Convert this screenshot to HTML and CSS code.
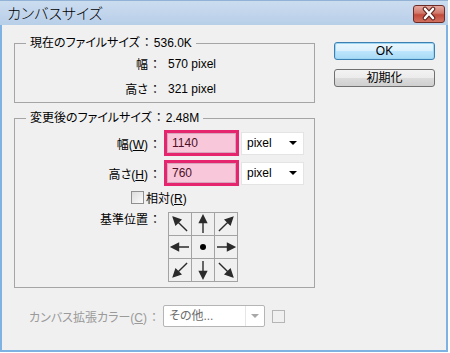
FILE: index.html
```html
<!DOCTYPE html>
<html lang="ja">
<head>
  <meta charset="UTF-8" />
  <title>カンバスサイズ</title>
  <link rel="stylesheet" href="styles.css">
</head>
<body>
  <div class="window">
    <div class="titlebar">
      <span class="title">カンバスサイズ</span>
      <span class="close">
        <svg width="30" height="15" viewBox="0 0 30 15">
          <path d="M11 3 L19 12 M19 3 L11 12" stroke="#5a1d18" stroke-width="4.5" stroke-linecap="round"/>
          <path d="M11 3 L19 12 M19 3 L11 12" stroke="#fff" stroke-width="2.6" stroke-linecap="round"/>
        </svg>
      </span>
    </div>

    <div class="content">
      <div class="main">
        <fieldset class="group current">
          <legend>現在のファイルサイズ<span class="colon">：</span>536.0K</legend>
          <div class="row">
            <span class="label">幅<span class="colon">：</span></span>
            <span class="value">570 pixel</span>
          </div>
          <div class="row">
            <span class="label">高さ<span class="colon">：</span></span>
            <span class="value">321 pixel</span>
          </div>
        </fieldset>

        <fieldset class="group changed">
          <legend>変更後のファイルサイズ<span class="colon">：</span>2.48M</legend>
          <div class="row field">
            <span class="label">幅(<u>W</u>)<span class="colon">：</span></span>
            <div class="input">1140</div>
            <div class="select">pixel<span class="caret"></span></div>
          </div>
          <div class="row field">
            <span class="label">高さ(<u>H</u>)<span class="colon">：</span></span>
            <div class="input">760</div>
            <div class="select">pixel<span class="caret"></span></div>
          </div>
          <div class="check">
            <span class="box"></span>
            <span>相対(<u>R</u>)</span>
          </div>
          <div class="row anchor">
            <span class="label">基準位置<span class="colon">：</span></span>
            <div class="grid">
              <div class="cell"><svg viewBox="0 0 22 22"><g transform="rotate(-45 11 11)"><path d="M11 1.5 L14.5 8.5 L7.5 8.5 Z M11 7 V21"/></g></svg></div>
              <div class="cell"><svg viewBox="0 0 22 22"><path d="M11 2.5 L14.5 9.5 L7.5 9.5 Z M11 8 V20"/></svg></div>
              <div class="cell"><svg viewBox="0 0 22 22"><g transform="rotate(45 11 11)"><path d="M11 1.5 L14.5 8.5 L7.5 8.5 Z M11 7 V21"/></g></svg></div>
              <div class="cell"><svg viewBox="0 0 22 22"><g transform="rotate(-90 11 11)"><path d="M11 2.5 L14.5 9.5 L7.5 9.5 Z M11 8 V20"/></g></svg></div>
              <div class="cell"><svg viewBox="0 0 22 22"><circle cx="11" cy="11" r="3"/></svg></div>
              <div class="cell"><svg viewBox="0 0 22 22"><g transform="rotate(90 11 11)"><path d="M11 2.5 L14.5 9.5 L7.5 9.5 Z M11 8 V20"/></g></svg></div>
              <div class="cell"><svg viewBox="0 0 22 22"><g transform="rotate(-135 11 11)"><path d="M11 1.5 L14.5 8.5 L7.5 8.5 Z M11 7 V21"/></g></svg></div>
              <div class="cell"><svg viewBox="0 0 22 22"><g transform="rotate(180 11 11)"><path d="M11 2.5 L14.5 9.5 L7.5 9.5 Z M11 8 V20"/></g></svg></div>
              <div class="cell"><svg viewBox="0 0 22 22"><g transform="rotate(135 11 11)"><path d="M11 1.5 L14.5 8.5 L7.5 8.5 Z M11 7 V21"/></g></svg></div>
            </div>
          </div>
        </fieldset>

        <div class="row extension">
          <span class="label">カンバス拡張カラー(<u>C</u>)<span class="colon">：</span></span>
          <div class="combo">
            <span class="combo-text">その他...</span>
            <span class="combo-btn"><span class="caret"></span></span>
          </div>
          <span class="swatch"></span>
        </div>
      </div>

      <div class="side">
        <div class="btn ok">OK</div>
        <div class="btn">初期化</div>
      </div>
    </div>
  </div>
</body>
</html>
```

FILE: styles.css
```css
body {
  margin: 0;
  background: #fff;
  font-family: "Liberation Sans", "Noto Sans CJK JP", sans-serif;
  font-size: 12px;
  font-feature-settings: "palt";
  color: #000;
}
.colon {
  font-feature-settings: normal;
  padding: 0 1px;
}
.window {
  width: 448px;
  height: 352px;
  box-sizing: border-box;
  background: #f0f0f0;
  border: 2px solid #7db2e2;
  border-top: none;
}
.titlebar {
  height: 25px;
  margin: 0 -2px;
  padding: 0 3px 0 7px;
  display: flex;
  justify-content: space-between;
  background: linear-gradient(#cbdcef, #b8cfe9);
  border-top: 1px solid #93b3d6;
  box-sizing: border-box;
}
.title {
  font-family: "Noto Sans CJK JP", sans-serif;
  font-size: 15px;
  font-weight: 300;
  line-height: 24px;
}
.close {
  margin-top: 4px;
  width: 30px;
  height: 16px;
  border: 1px solid #6d2b26;
  border-radius: 3px;
  background: linear-gradient(#e7a99f, #d07769 45%, #c24a3b 55%, #d2705f);
  display: flex;
}
.content {
  display: flex;
  padding: 10px 0 0 12px;
}
.main {
  width: 301px;
}
.side {
  margin-left: 19px;
  padding-top: 7px;
  display: flex;
  flex-direction: column;
  gap: 9px;
}
.group {
  margin: 0;
  padding: 0;
  min-width: 0;
  border: 1px solid #a5a5a5;
}
.group legend {
  margin-left: 11px;
  padding: 0 4px;
  line-height: 16px;
}
.changed {
  margin-top: 7px;
  padding-bottom: 5px;
}
.current {
  padding-bottom: 1px;
}
.row {
  display: grid;
  grid-template-columns: 147px auto;
  align-items: center;
  height: 25px;
}
.label {
  text-align: right;
}
.value {
  padding-left: 6px;
}
.field {
  grid-template-columns: 147px 75px 63px;
  column-gap: 2px;
  height: 26px;
  margin-top: 4px;
}
.input {
  height: 26px;
  box-sizing: border-box;
  border: 3px solid #e6256f;
  background: #f9c7da;
  box-shadow: inset 0 0 0 1px #d7a6bd;
  color: #4d1028;
  padding-left: 5px;
  line-height: 20px;
}
.select {
  height: 23px;
  box-sizing: border-box;
  background: #fff;
  border: 1px solid #e4e4e4;
  padding: 0 0 0 5px;
  line-height: 21px;
  display: flex;
  justify-content: space-between;
  align-items: center;
}
.caret {
  width: 0;
  height: 0;
  margin-right: 6px;
  border-left: 4px solid transparent;
  border-right: 4px solid transparent;
  border-top: 4px solid #000;
}
.check {
  display: flex;
  align-items: center;
  gap: 2px;
  height: 17px;
  margin: 3px 0 0 116px;
}
.box {
  width: 13px;
  height: 13px;
  box-sizing: border-box;
  border: 1px solid #8f8f8f;
  background: linear-gradient(135deg, #dcdcdc, #fbfbfb);
}
.anchor {
  align-items: start;
  height: auto;
  margin-top: 6px;
  grid-template-columns: 147px auto;
  column-gap: 6px;
}
.anchor .label {
  line-height: 16px;
}
.grid {
  display: grid;
  grid-template-columns: repeat(3, 22px);
  gap: 1px;
  width: 70px;
  padding: 1px;
  box-sizing: border-box;
  background: #a3a3a3;
}
.cell {
  width: 22px;
  height: 22px;
  background: #f0f0f0;
}
.cell svg {
  display: block;
  width: 22px;
  height: 22px;
}
.cell path {
  fill: #2b2b2b;
  stroke: #2b2b2b;
  stroke-width: 1.4;
}
.cell circle {
  fill: #000;
}
.extension {
  margin-top: 17px;
  height: 22px;
  grid-template-columns: 147px 102px 13px;
  column-gap: 2px;
  color: #9a9a9a;
}
.combo {
  height: 22px;
  box-sizing: border-box;
  border: 1px solid #b5b5b5;
  border-radius: 2px;
  background: #fff;
  display: flex;
}
.combo-text {
  flex: 1;
  color: #6d6d6d;
  padding-left: 5px;
  line-height: 20px;
}
.combo-btn {
  width: 18px;
  border-left: 1px solid #e6e6e6;
  display: flex;
  align-items: center;
  justify-content: center;
}
.combo-btn .caret {
  margin: 0;
  border-top-color: #a8a8a8;
}
.swatch {
  width: 13px;
  height: 13px;
  margin-left: 5px;
  border: 1px solid #b5b5b5;
  box-sizing: border-box;
}
.btn {
  width: 101px;
  height: 18px;
  box-sizing: border-box;
  border: 1px solid #707070;
  border-radius: 3px;
  background: linear-gradient(#f3f3f3, #ebebeb 50%, #dcdcdc 50%, #cfcfcf);
  text-align: center;
  line-height: 16px;
}
.ok {
  border-color: #3c7fb1;
  background: linear-gradient(#eaf6fd, #d9f0fc 50%, #bee6fd 50%, #a7d9f5);
  box-shadow: inset 0 0 0 1px #9cd6f3;
}
```
